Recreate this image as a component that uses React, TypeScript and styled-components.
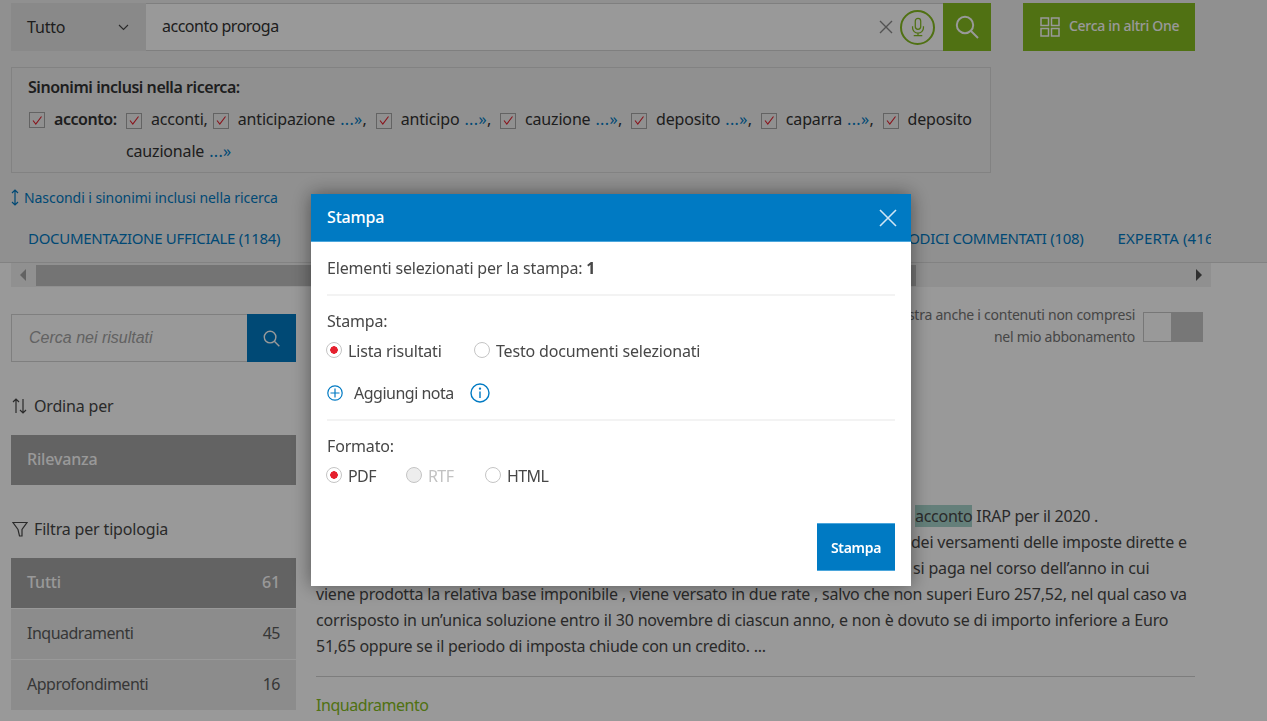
import React from "react";
import styled, { createGlobalStyle } from "styled-components";

const FONT = `"Noto Sans", "Liberation Sans", sans-serif`;

const GlobalStyle = createGlobalStyle`
  html, body {
    margin: 0;
    padding: 0;
    height: 100%;
    overflow: hidden;
    background: #fff;
  }
  body {
    font-family: ${FONT};
    font-size: 16px;
    letter-spacing: -0.17px;
    color: #474747;
  }
  * { box-sizing: border-box; }
`;

const Page = styled.div`
  width: 1267px;
  height: 721px;
  overflow: hidden;
`;

const TopArea = styled.div`
  background: #f0f0f0;
  height: 263px;
  padding: 3px 0 0 11px;
  border-bottom: 1px solid #d9d9d9;
`;

const SearchRow = styled.div`
  display: flex;
  height: 48px;
`;

const Select = styled.div`
  width: 135px;
  background: #e5e5e5;
  display: flex;
  align-items: center;
  justify-content: space-between;
  padding: 0 17px 0 16px;
  color: #333;
  line-height: 46px;
`;

const SearchInput = styled.div`
  width: 797px;
  background: #fff;
  border-top: 1px solid #d4d4d4;
  border-bottom: 1px solid #d4d4d4;
  display: flex;
  align-items: center;
  padding: 0 8px 0 16px;
  color: #333;
`;

const Query = styled.span`
  flex: 1;
  margin-top: -2px;
  letter-spacing: -0.5px;
`;

const ClearButton = styled.span`
  display: flex;
  margin-right: 7px;
`;

const MicButton = styled.span`
  width: 35px;
  height: 35px;
  border: 2px solid #85bc20;
  border-radius: 50%;
  display: flex;
  align-items: center;
  justify-content: center;
`;

const GreenButton = styled.div`
  height: 48px;
  background: #85bc20;
  color: #fff;
  display: flex;
  align-items: center;
`;

const SearchButton = styled(GreenButton)`
  width: 48px;
  justify-content: center;
`;

const OtherButton = styled(GreenButton)`
  width: 172px;
  margin-left: 32px;
  padding-left: 17px;
  gap: 9px;
  font-size: 14px;
  font-weight: 500;
  letter-spacing: -0.3px;
  line-height: 44px;
`;

const OtherLabel = styled.span`
  margin-top: -3px;
`;

const SynonymBox = styled.div`
  width: 980px;
  height: 106px;
  margin-top: 16px;
  border: 1px solid #d9d9d9;
  padding: 6px 16px 0;
  color: #333;
`;

const SynonymTitle = styled.div`
  font-weight: 600;
  letter-spacing: -0.45px;
  line-height: 26px;
`;

const SynonymRow = styled.div`
  display: flex;
  line-height: 32px;
  margin-top: 3px;
`;

const MainWord = styled.div`
  width: 98px;
  flex: none;
  font-weight: 600;
  letter-spacing: -0.45px;
  display: flex;
  align-items: flex-start;
`;

const SynonymList = styled.div`
  width: 850px;
`;

const Check = styled.span<{ $gap?: number }>`
  display: inline-flex;
  align-items: center;
  justify-content: center;
  width: 16px;
  height: 16px;
  border: 1px solid #a6a6a6;
  vertical-align: -1px;
  margin: 0 9px 0 ${(p) => p.$gap ?? 0}px;
`;

const MainCheck = styled(Check)`
  margin-top: 9px;
  margin-left: 1px;
  flex: none;
`;

const More = styled.span`
  color: #007ac3;
  margin-left: 1px;
  letter-spacing: 0.35px;
`;

const HideLink = styled.div`
  display: flex;
  align-items: center;
  gap: 5px;
  margin-top: 15px;
  font-size: 14px;
  letter-spacing: -0.07px;
  color: #007ac3;
`;

const Tabs = styled.div`
  display: flex;
  width: 1200px;
  overflow: hidden;
  margin-top: 21px;
  padding-left: 17px;
  white-space: nowrap;
  color: #007ac3;
  font-size: 15px;
  letter-spacing: -0.3px;
  text-transform: uppercase;
`;

const Tab = styled.span<{ $gap?: number; $track?: number }>`
  margin-left: ${(p) => p.$gap ?? 0}px;
  letter-spacing: ${(p) => p.$track ?? -0.3}px;
`;

const ScrollTrack = styled.div`
  margin-left: 11px;
  width: 1200px;
  height: 24px;
  background: #f1f1f1;
  display: flex;
  align-items: center;
  justify-content: space-between;
  padding: 0 9px;
`;

const ScrollThumb = styled.div`
  width: 880px;
  height: 21px;
  margin-left: 10px;
  margin-right: auto;
  background: #c1c1c1;
`;

const Arrow = styled.span<{ $dir: "left" | "right" }>`
  width: 0;
  height: 0;
  border-top: 6px solid transparent;
  border-bottom: 6px solid transparent;
  ${(p) =>
    p.$dir === "left"
      ? "border-right: 6px solid #a3a3a3;"
      : "border-left: 6px solid #505050;"}
`;

const Content = styled.div`
  display: flex;
  padding: 27px 0 0 11px;
`;

const Sidebar = styled.aside`
  width: 285px;
  flex: none;
`;

const FilterSearch = styled.div`
  display: flex;
  height: 48px;
`;

const FilterInput = styled.div`
  flex: 1;
  border: 1px solid #d4d4d4;
  border-right: none;
  display: flex;
  align-items: center;
  padding-left: 17px;
  font-family: "Liberation Sans", sans-serif;
  font-style: italic;
  font-size: 16px;
  letter-spacing: 0;
  color: #a3a3a3;
`;

const FilterButton = styled.div`
  width: 49px;
  background: #007ac3;
  display: flex;
  align-items: center;
  justify-content: center;
`;

const SideHeading = styled.div`
  display: flex;
  align-items: center;
  gap: 6px;
  margin: 33px 0 18px 1px;
  height: 22px;
`;

const SideItem = styled.div<{ $active?: boolean }>`
  height: 50px;
  margin-bottom: 1px;
  padding: 0 16px 2px;
  display: flex;
  align-items: center;
  justify-content: space-between;
  background: ${(p) => (p.$active ? "#a5a5a5" : "#e9e9e9")};
  color: ${(p) => (p.$active ? "#fff" : "#5c5c5c")};
  font-weight: ${(p) => (p.$active ? 500 : 400)};
  letter-spacing: ${(p) => (p.$active ? "-0.17px" : "-0.5px")};
`;

const Results = styled.main`
  width: 879px;
  margin-left: 20px;
  position: relative;
`;

const ToggleRow = styled.div`
  display: flex;
  justify-content: flex-end;
  gap: 8px;
  width: 887px;
  margin-top: -10px;
  font-size: 14px;
  letter-spacing: -0.25px;
  line-height: 22px;
  color: #757575;
  text-align: right;
`;

const Toggle = styled.div`
  width: 60px;
  height: 30px;
  margin-top: 8px;
  border: 1px solid #c6c6c6;
  background: #fff;
  display: flex;
  justify-content: flex-end;
`;

const ToggleKnob = styled.span`
  width: 31px;
  background: #c6c6c6;
`;

const Snippet = styled.div`
  margin-top: 155px;
  line-height: 26px;
  white-space: nowrap;
`;

const SnippetLine = styled.div<{ $indent?: number; $track?: number }>`
  padding-left: ${(p) => p.$indent ?? 0}px;
  letter-spacing: ${(p) => p.$track ?? -0.17}px;
`;

const Mark = styled.mark`
  background: #a7d4cb;
  color: inherit;
`;

const Rule = styled.hr`
  border: none;
  border-top: 1px solid #d0d0d0;
  margin: 17px 0 17px;
`;

const Category = styled.div`
  color: #85bc20;
  letter-spacing: -0.45px;
`;

const Backdrop = styled.div`
  position: fixed;
  inset: 0;
  background: rgba(0, 0, 0, 0.4);
`;

const Modal = styled.div`
  position: fixed;
  left: 311px;
  top: 194px;
  width: 600px;
  height: 392px;
  background: #fff;
  box-shadow: 0 0 18px rgba(0, 0, 0, 0.45);
  display: flex;
  flex-direction: column;
  color: #474747;
`;

const ModalHeader = styled.div`
  height: 48px;
  flex: none;
  background: #007ac3;
  border-bottom: 1px solid #4ba6dc;
  display: flex;
  align-items: center;
  justify-content: space-between;
  padding: 0 14px 2px 16px;
  color: #fff;
  font-weight: 500;
`;

const CloseIcon = styled.svg`
  margin-top: 2px;
`;

const ModalBody = styled.div`
  flex: 1;
  padding: 0 16px 15px;
  display: flex;
  flex-direction: column;
`;

const Section = styled.div<{ $height: number }>`
  height: ${(p) => p.$height}px;
  border-bottom: 2px solid #f3f3f3;
`;

const InfoLine = styled.div`
  padding-top: 15px;
  line-height: 22px;
`;

const FieldLabel = styled.div`
  padding-top: 14px;
  line-height: 22px;
`;

const RadioGroup = styled.div<{ $track?: number }>`
  display: flex;
  margin: 8px 0 0 -1px;
  line-height: 22px;
  letter-spacing: ${(p) => p.$track ?? -0.17}px;
`;

const RadioOption = styled.label<{ $width: number; $disabled?: boolean }>`
  display: flex;
  align-items: center;
  gap: 6px;
  width: ${(p) => p.$width}px;
  color: ${(p) => (p.$disabled ? "#c2c2c2" : "inherit")};
`;

const RadioDot = styled.span<{ $on?: boolean; $disabled?: boolean }>`
  width: 16px;
  height: 16px;
  flex: none;
  margin-top: -2px;
  border-radius: 50%;
  border: 1px solid #c4c4c4;
  background: ${(p) =>
    p.$on
      ? "radial-gradient(circle, #e5202e 0 3.5px, #fff 4px)"
      : p.$disabled
        ? "#ededed"
        : "#fff"};
`;

const NoteRow = styled.div`
  display: flex;
  align-items: center;
  margin-top: 20px;
  line-height: 22px;
`;

const NoteLabel = styled.span`
  margin: 0 16px 0 11px;
  letter-spacing: -0.5px;
`;

const ModalFooter = styled.div`
  margin-top: auto;
  display: flex;
  justify-content: flex-end;
`;

const PrintButton = styled.button`
  width: 78px;
  height: 48px;
  border: none;
  border-top: 1px solid #4ba6dc;
  border-bottom: 1px solid #4ba6dc;
  background: #007ac3;
  color: #fff;
  font-family: ${FONT};
  font-size: 14px;
  font-weight: 600;
  letter-spacing: -0.3px;
`;

const CheckMark = () => (
  <svg width="12" height="11" viewBox="0 0 12 11" fill="none">
    <path d="M2 5.5 4.8 9 10.5 1.5" stroke="#e5202e" strokeWidth="1.1" />
  </svg>
);

const SearchIcon = ({ size, color }: { size: number; color: string }) => (
  <svg width={size} height={size} viewBox="0 0 24 24" fill="none">
    <circle cx="10" cy="10" r="8.2" stroke={color} strokeWidth="2" />
    <path d="M16 16l7 7" stroke={color} strokeWidth="2" />
  </svg>
);

const synonyms = ["anticipazione", "anticipo", "cauzione", "deposito", "caparra"];

function App() {
  return (
    <Page>
      <GlobalStyle />
      <TopArea>
        <SearchRow>
          <Select>
            Tutto
            <svg width="11" height="7" viewBox="0 0 11 7" fill="none">
              <path d="M1 1l4.5 4.5L10 1" stroke="#444" strokeWidth="1.1" />
            </svg>
          </Select>
          <SearchInput>
            <Query>acconto proroga</Query>
            <ClearButton>
              <svg width="14" height="14" viewBox="0 0 14 14" fill="none">
                <path d="M1 1l12 12M13 1L1 13" stroke="#8a8a8a" strokeWidth="1.4" />
              </svg>
            </ClearButton>
            <MicButton>
              <svg width="14" height="20" viewBox="0 0 18 24" fill="none" stroke="#85bc20" strokeWidth="1.6">
                <rect x="5.5" y="1" width="7" height="14" rx="3.5" />
                <path d="M2 11v2a7 7 0 0 0 14 0v-2M9 20v3M3.5 23h11" />
              </svg>
            </MicButton>
          </SearchInput>
          <SearchButton>
            <SearchIcon size={24} color="#fff" />
          </SearchButton>
          <OtherButton>
            <svg width="20" height="20" viewBox="0 0 20 20" fill="none" stroke="#fff" strokeWidth="1.5">
              <rect x="1" y="1" width="7.5" height="7.5" />
              <rect x="11.5" y="1" width="7.5" height="7.5" />
              <rect x="1" y="11.5" width="7.5" height="7.5" />
              <rect x="11.5" y="11.5" width="7.5" height="7.5" />
            </svg>
            <OtherLabel>Cerca in altri One</OtherLabel>
          </OtherButton>
        </SearchRow>

        <SynonymBox>
          <SynonymTitle>Sinonimi inclusi nella ricerca:</SynonymTitle>
          <SynonymRow>
            <MainWord>
              <MainCheck>
                <CheckMark />
              </MainCheck>
              acconto:
            </MainWord>
            <SynonymList>
              <Check>
                <CheckMark />
              </Check>
              acconti,{" "}
              {synonyms.map((word, index) => (
                <React.Fragment key={word}>
                  <Check $gap={index === 0 ? 1 : 5}>
                    <CheckMark />
                  </Check>
                  {word} <More>...»</More>,{" "}
                </React.Fragment>
              ))}
              <Check $gap={5}>
                <CheckMark />
              </Check>
              deposito cauzionale <More>...»</More>
            </SynonymList>
          </SynonymRow>
        </SynonymBox>

        <HideLink>
          <svg width="8" height="17" viewBox="0 0 8 17" fill="none" stroke="#007ac3" strokeWidth="1.2">
            <path d="M4 1v15M1 4l3-3 3 3M1 13l3 3 3-3" />
          </svg>
          Nascondi i sinonimi inclusi nella ricerca
        </HideLink>

        <Tabs>
          <Tab>Documentazione ufficiale (1184)</Tab>
          <Tab $gap={619}>Codici commentati (108)</Tab>
          <Tab $gap={34} $track={0.1}>
            Experta (416)
          </Tab>
        </Tabs>
      </TopArea>

      <ScrollTrack>
        <Arrow $dir="left" />
        <ScrollThumb />
        <Arrow $dir="right" />
      </ScrollTrack>

      <Content>
        <Sidebar>
          <FilterSearch>
            <FilterInput>Cerca nei risultati</FilterInput>
            <FilterButton>
              <SearchIcon size={17} color="#fff" />
            </FilterButton>
          </FilterSearch>

          <SideHeading>
            <svg width="16" height="16" viewBox="0 0 16 16" fill="none" stroke="#474747" strokeWidth="1.2">
              <path d="M4 15V1M1 4l3-3 3 3M11 1v14M8 12l3 3 3-3" />
            </svg>
            Ordina per
          </SideHeading>
          <SideItem $active>Rilevanza</SideItem>

          <SideHeading>
            <svg width="16" height="16" viewBox="0 0 16 16" fill="none" stroke="#474747" strokeWidth="1.2">
              <path d="M1 1.5h14L10 8.5V15H7.5L6 8.5z" />
            </svg>
            Filtra per tipologia
          </SideHeading>
          <SideItem $active>
            Tutti<span>61</span>
          </SideItem>
          <SideItem>
            Inquadramenti<span>45</span>
          </SideItem>
          <SideItem>
            Approfondimenti<span>16</span>
          </SideItem>
        </Sidebar>

        <Results>
          <ToggleRow>
            <span>
              Mostra anche i contenuti non compresi
              <br />
              nel mio abbonamento
            </span>
            <Toggle>
              <ToggleKnob />
            </Toggle>
          </ToggleRow>
          <Snippet>
            <SnippetLine $indent={599} $track={-0.27}>
              <Mark>acconto</Mark> IRAP per il 2020 .
            </SnippetLine>
            <SnippetLine $indent={595} $track={-0.22}>
              dei versamenti delle imposte dirette e
            </SnippetLine>
            <SnippetLine $indent={597}>si paga nel corso dell’anno in cui</SnippetLine>
            <SnippetLine $track={-0.21}>
              viene prodotta la relativa base imponibile , viene versato in due rate , salvo che non superi Euro 257,52, nel qual caso va
            </SnippetLine>
            <SnippetLine>
              corrisposto in un’unica soluzione entro il 30 novembre di ciascun anno, e non è dovuto se di importo inferiore a Euro
            </SnippetLine>
            <SnippetLine $track={-0.27}>51,65 oppure se il periodo di imposta chiude con un credito. ...</SnippetLine>
          </Snippet>
          <Rule />
          <Category>Inquadramento</Category>
        </Results>
      </Content>

      <Backdrop />

      <Modal>
        <ModalHeader>
          Stampa
          <CloseIcon width="18" height="18" viewBox="0 0 18 18" fill="none">
            <path d="M1 1l16 16M17 1L1 17" stroke="#cfe6f5" strokeWidth="1.6" />
          </CloseIcon>
        </ModalHeader>
        <ModalBody>
          <Section $height={54}>
            <InfoLine>
              Elementi selezionati per la stampa: <b>1</b>
            </InfoLine>
          </Section>
          <Section $height={125}>
            <FieldLabel>Stampa:</FieldLabel>
            <RadioGroup>
              <RadioOption $width={148}>
                <RadioDot $on />
                Lista risultati
              </RadioOption>
              <RadioOption $width={260}>
                <RadioDot />
                Testo documenti selezionati
              </RadioOption>
            </RadioGroup>
            <NoteRow>
              <svg width="16" height="16" viewBox="0 0 16 16" fill="none" stroke="#007ac3" strokeWidth="1.2">
                <circle cx="8" cy="8" r="7.2" />
                <path d="M8 3.5v9M3.5 8h9" />
              </svg>
              <NoteLabel>Aggiungi nota</NoteLabel>
              <svg width="20" height="20" viewBox="0 0 20 20" fill="none" stroke="#007ac3" strokeWidth="1.4">
                <circle cx="10" cy="10" r="9" />
                <path d="M10 8.5V15" />
                <circle cx="10" cy="5.6" r="0.5" />
              </svg>
            </NoteRow>
          </Section>
          <FieldLabel>Formato:</FieldLabel>
          <RadioGroup $track={-0.6}>
            <RadioOption $width={80}>
              <RadioDot $on />
              PDF
            </RadioOption>
            <RadioOption $width={79} $disabled>
              <RadioDot $disabled />
              RTF
            </RadioOption>
            <RadioOption $width={80}>
              <RadioDot />
              HTML
            </RadioOption>
          </RadioGroup>
          <ModalFooter>
            <PrintButton>Stampa</PrintButton>
          </ModalFooter>
        </ModalBody>
      </Modal>
    </Page>
  );
}

export default App;
